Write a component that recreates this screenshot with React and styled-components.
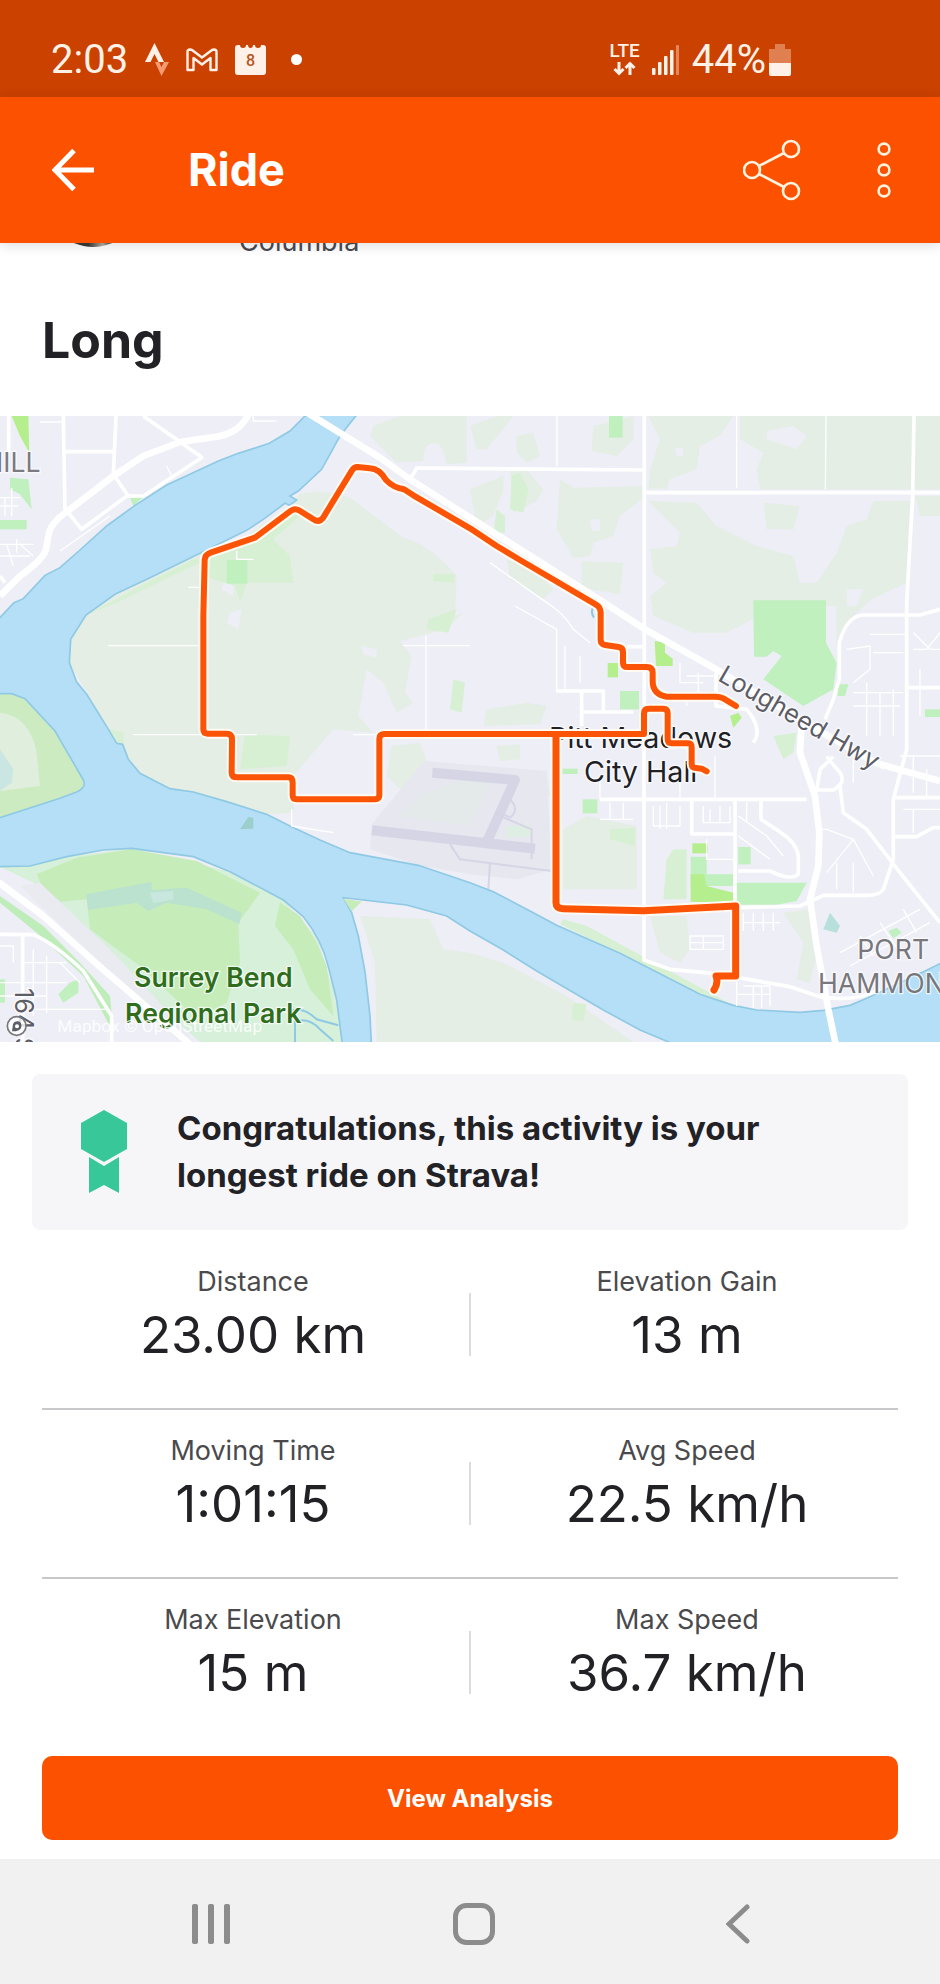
import React from "react";
import styled, { createGlobalStyle } from "styled-components";

const stats = [
  [
    { label: "Distance", value: "23.00 km" },
    { label: "Elevation Gain", value: "13 m" },
  ],
  [
    { label: "Moving Time", value: "1:01:15" },
    { label: "Avg Speed", value: "22.5 km/h" },
  ],
  [
    { label: "Max Elevation", value: "15 m" },
    { label: "Max Speed", value: "36.7 km/h" },
  ],
];

// Map data, drawn in a 2820 x 1878 space
const farmland = [
  "M258 597L345 535L450 485L600 412L780 350L900 235Q960 215 1050 245L1150 320L1210 365Q1290 385 1370 480L1365 600L1390 590L1340 640L1200 675L1235 720L1215 830L1240 860L1190 890L1150 800L1100 760L1075 900L1120 950L1000 940L880 1080L880 1190L800 1195L680 1157L510 1118L420 1072L350 982L208 740L212 670Z",
  "M1120 30L1200 0H1400V140L1340 145Q1330 80 1300 80Q1270 85 1270 135L1190 140L1110 60Z",
  "M1410 30L1490 0H1540L1460 100H1430Z",
  "M1550 60L1600 50L1620 120L1580 140L1550 110Z",
  "M1780 30L1900 0V70L1850 120L1775 105Z",
  "M1945 0H2200L2160 60L2100 90L2090 160L2010 190L2000 218H1945L1950 160L1980 70Z",
  "M2220 0H2820V220H2280L2270 160L2290 110L2220 70Z",
  "M1680 190L1720 215L1925 210V250L1860 300L1840 360L1780 380L1770 420L1720 425L1670 340Z",
  "M1745 435L1870 440L1860 535L1745 515Z",
  "M1410 220L1510 180V220L1480 300L1430 330Z",
  "M1530 160H1580L1630 220L1610 255L1540 290Z",
  "M1520 430L1600 455L1660 520L1630 550L1530 490Z",
  "M1945 255L2090 260L2150 330L2270 390L2380 420L2400 500L2450 500L2510 410L2540 330L2600 310L2620 255H2730L2720 500L2615 550L2560 600L2510 690V570H2260V610L2180 650H2080L1960 600L1950 540L2000 500L1960 470L1950 400L2030 390L2040 350Z",
  "M2290 260L2400 270L2380 340L2300 340Z",
  "M2745 240H2820V300H2760Z",
  "M1690 1240L1760 1200L1910 1230V1420H1690Z",
  "M1460 880L1580 860L1640 870L1620 925L1450 930Z",
  "M1175 990L1260 980L1290 1060L1200 1120L1160 1080Z",
  "M1490 990L1560 985V1030L1500 1035Z",
  "M1575 1080L1640 1075L1650 1140L1580 1140Z",
  "M2350 1490L2430 1480L2450 1620L2430 1700L2390 1690L2410 1580Z",
  "M1950 1500H2060L2070 1600L2040 1640L1980 1610Z",
  "M1080 1500L1290 1510L1330 1600L1410 1610L1510 1640L1700 1740L1900 1878H1130L1125 1640Z",
];

const clearings = [
  "M680 470L700 470V540L665 520Z",
  "M690 590L725 580L715 640L680 620Z",
  "M1085 690L1130 700L1130 725L1090 715Z",
  "M1770 310H1800V345H1775Z",
  "M2025 95H2050V120H2030Z",
  "M2300 45L2380 30L2420 60L2390 100L2300 70Z",
  "M2540 520H2590L2570 570H2540Z",
];

const meadows = [
  "M600 412L740 360L855 280L900 300L820 370L870 420L880 500H740L720 560L705 510L610 480Z",
  "M320 935L370 950V990L340 982Z",
  "M258 597L450 495L590 425L600 440L350 560Z",
  "M735 955L870 960L860 1050L720 1060Z",
  "M1285 610L1370 580L1345 650L1280 640Z",
  "M1300 475L1365 475L1360 500L1300 495Z",
  "M1360 790L1395 800L1385 890L1350 880Z",
  "M1535 180L1560 170L1585 220L1570 290L1530 280Z",
  "M1490 280L1515 300V350H1480Z",
  "M2000 1330L2020 1300L2060 1300V1450H1990Z",
  "M1830 1240L1905 1235V1290L1830 1270Z",
  "M2320 960L2390 950L2380 1010L2350 1030Z",
  "M1690 1510L1760 1530L2000 1660L2200 1768L2100 1735L1860 1612L1680 1525Z",
  "M1720 1760L1760 1765L1750 1815L1715 1810Z",
];

const parks = [
  "M680 432H742V503H680Z",
  "M2260 553H2478V680L2510 740L2500 820L2410 870L2290 790L2345 720L2320 705L2300 722H2262Z",
  "M1827 0H1868V65H1827Z",
  "M1860 825H1917V880H1860Z",
  "M390 245L430 243L400 270Z",
  "M0 312H80V340H0Z",
  "M30 185L85 190L95 280L60 235L30 220Z",
  "M1748 1150H1792V1192H1748Z",
  "M1688 1058H1733V1074H1688Z",
  "M2215 1293H2252V1345H2215Z",
  "M2072 1322H2120V1375H2200V1410H2072Z",
  "M2205 1400L2420 1400L2390 1455L2330 1466H2205Z",
  "M2665 1545L2690 1535L2705 1550L2680 1567Z",
  "M2775 880H2820V903H2775Z",
  "M2513 805H2545L2535 840H2513Z",
  "M175 1735L210 1700L235 1690V1730L190 1760Z",
  "M0 1690H15V1760H0Z",
];

const lawns = [
  "M35 0H85L88 110L60 60Z",
  "M1823 741H1854V784H1823Z",
  "M1964 675L1995 680V710L2018 728V750H1968Z",
  "M2077 1282H2123V1312H2077Z",
  "M2072 1375H2112L2120 1410L2200 1430V1460L2072 1457Z",
  "M2190 900L2215 890L2225 905L2200 935Z",
];

const mainRoads = [
  "M925 -8L1140 125L1230 190L1410 305L1800 552L1935 640L2140 755L2450 940L2630 1042L2820 1095",
  "M745 -5Q720 50 650 62L540 78L430 120L340 180L210 280Q150 320 145 360L138 400Q130 430 60 480L0 540",
  "M2405 920L2400 1010L2445 1140L2458 1250L2455 1350L2430 1450L2450 1590L2485 1780L2506 1880",
  "M-5 1398L130 1500L300 1652L570 1885",
];

const roads = [
  "M1933 0V880",
  "M1230 190L1250 156L1930 162",
  "M1935 230H2820",
  "M2742 0L2738 240L2720 560V1000L2680 1150V1330L2650 1420Q2640 1438 2600 1438H2470L2400 1470L2205 1475",
  "M2475 910L2500 850L2518 790V680Q2540 600 2590 597H2760L2820 580",
  "M1800 1150H2420",
  "M1932 880V1632L2010 1660L2140 1672L2370 1712L2460 1742Q2560 1760 2640 1720",
  "M2205 1150V1470",
  "M2075 1150V1254H2205",
  "M2283 1145V1210L2340 1248Q2390 1280 2395 1320V1375Q2370 1395 2310 1365H2215",
  "M2500 1022L2460 1060L2450 1122H2500Q2540 1100 2520 1070L2480 1022",
  "M2520 1110L2530 1190L2600 1240L2700 1370L2820 1520",
  "M2680 1145H2820",
  "M2680 1262H2750L2800 1235H2820",
  "M2720 815H2820",
  "M1670 825H1810V888H1745M1745 825V930M1745 888H1900",
  "M1880 692H1930",
  "M2148 770V870L2240 880Q2290 940 2260 980",
  "M190 0L195 285M348 0L340 178M190 107H340M430 0L600 120L605 125L430 240L380 240L245 340L205 290M345 182L385 240M26 0V110",
  "M0 1555L100 1556Q160 1580 250 1665L335 1800V1878M68 1560V1878M0 480L15 500",
];

const lanes = [
  "M325 689H600M710 405V430H760M565 514H600M400 956H770M875 1180V1230L1000 1250",
  "M1278 660V950M1210 689H1410M1060 956H1140M1671 0V150M2210 0V215M2478 0L2476 220",
  "M1470 440L1640 560Q1690 590 1720 640L1770 680M1545 570L1670 640V830M1695 690V830M1740 720V800",
  "M2040 740V800H2110M2060 780H2140M2020 830H2100M2060 830V870M2095 770V850",
  "M1960 1170V1230H2040V1170M1980 1170V1240M2000 1160V1240M2110 1170V1220H2190V1170M2130 1180V1220M2160 1170V1220",
  "M2215 1200L2300 1260L2350 1320M2215 1260L2310 1330M2120 1270V1330H2200M2240 1150V1220",
  "M2070 1560H2170V1600H2070ZM2070 1580H2170M2110 1560V1600M2230 1490V1545M2230 1520H2340M2260 1490V1545M2290 1490V1545M2320 1490V1545",
  "M2210 1690V1770M2230 1710H2310V1770M2260 1710V1775M2285 1710V1775M2210 1735H2310",
  "M2480 1240L2560 1270L2620 1380M2560 1270L2480 1370M2510 1340V1420M2560 1340V1430M2480 1240H2460",
  "M2520 1610L2760 1480M2550 1650L2790 1520M2580 1560L2620 1620M2640 1520L2700 1610M2710 1480L2750 1550",
  "M2540 700L2610 690V760L2560 800M2610 655H2720M2560 830H2710M2560 870H2700M2600 800V960M2640 830V960M2680 820V960M2620 710H2710M2740 650L2790 700H2820M2740 700H2780L2820 650M2760 760V900",
  "M2560 1000V1100M2600 1020L2650 1060M2700 1020H2820M2740 1020V1130M2780 1060V1140M2710 1180H2820M2740 1180V1250",
  "M0 245H60M0 270H55M35 215V300M15 245V300M0 385H100M0 420H90M20 385L40 450M60 385L100 420M50 370V410",
  "M0 1590H40V1640M0 1700H200M0 1740H140M100 1600V1800M140 1620V1790M68 1640H200M100 1780H330M180 1640L240 1700",
  "M120 18H190M180 405L330 300M500 150L515 180M760 0V15H830M1800 1090V1150M1800 1210H1900M1830 1160V1210M1870 1160V1210M2145 1020V1145M2040 1090V1145",
];

const river =
  "M915 0L870 45L808 82L715 112L655 135L500 207L405 268L320 330L240 402L180 455L135 478L70 548L42 560L-6 611V833H35L75 848L165 945L250 1092Q260 1115 230 1128L180 1147L-6 1207V1352L90 1350L200 1322L310 1302L395 1297L580 1322L690 1367L850 1452L910 1502Q965 1570 985 1652L1010 1752L1027 1884H1114L1110 1800L1095 1667L1075 1560L1055 1490L1030 1445L1220 1467L1340 1500L1410 1545L1510 1602L1610 1665L1810 1782L1920 1842L2020 1884H2826V1640L2780 1663L2600 1747L2550 1768L2470 1783L2400 1789L2270 1782L2200 1768L2100 1735L1860 1612L1670 1528L1600 1490L1480 1427L1410 1400L1255 1348L1050 1310L960 1272L870 1230L800 1195L680 1157L580 1128L510 1118L420 1072L385 1030L368 985L350 982L322 935L260 835L230 798L208 740L212 670L258 597L345 535L450 485L600 412L740 343L790 310L855 262L868 268L890 252L870 240L895 225L965 160L1020 60L1072 -6Z";

const Tracks = ({ paths, width, color }) => (
  <g
    fill="none"
    stroke={color || "#ffffff"}
    strokeWidth={width}
    strokeLinejoin="round"
  >
    {paths.map((d) => (
      <path key={d} d={d} />
    ))}
  </g>
);

const Areas = ({ paths, color }) => (
  <g fill={color}>
    {paths.map((d) => (
      <path key={d} d={d} />
    ))}
  </g>
);

const RouteLines = ({ color, extra }) => (
  <g
    fill="none"
    stroke={color}
    strokeLinecap="round"
    strokeLinejoin="round"
  >
    <path
      strokeWidth={18 + extra}
      d="M2208 870L2170 847Q2160 842 2145 842H2000Q1958 835 1958 795V770Q1958 753 1940 753H1882Q1869 753 1869 740V708Q1869 695 1856 693L1815 687Q1802 685 1802 672V590Q1802 574 1788 566L1560 432L1490 390L1410 337L1240 238L1212 220Q1180 215 1158 192Q1138 158 1110 157L1072 153Q1062 153 1056 163L970 304Q958 322 940 310L897 283Q885 276 873 284L765 365L632 410Q615 416 614 432L610 600V940Q610 953 623 953H680Q696 953 696 970L695 1070Q695 1084 712 1084H865Q878 1084 878 1100V1138Q878 1150 890 1150H1125Q1138 1150 1138 1137V968Q1138 954 1154 954H1932V892Q1932 878 1946 878H1990Q2003 878 2003 892V970Q2003 982 2016 982H2065Q2075 982 2075 994V1044Q2075 1056 2088 1056L2105 1058L2120 1066"
    />
    <path
      strokeWidth={21 + extra}
      d="M1668 958V1460Q1668 1477 1690 1478L1930 1484L2207 1470V1680H2148Q2156 1700 2142 1722"
    />
  </g>
);

const RideMap = () => (
  <MapCanvas
    viewBox="0 0 2820 1878"
    preserveAspectRatio="xMidYMid slice"
    role="img"
    aria-label="Route map of the ride"
  >
    <rect width="2820" height="1878" fill="#eeeef7" />
    <Areas paths={farmland} color="#e4eee4" />
    <Areas paths={clearings} color="#eeeef7" />
    <Areas paths={meadows} color="#d7f0d4" />
    <Areas paths={parks} color="#bff0bd" />
    <Areas paths={lawns} color="#b5ee8d" />

    {/* Island shore */}
    <path
      d="M0 833H35L75 848L165 945L250 1092L248 1119L180 1147L0 1207Z"
      fill="#cdebc0"
    />
    <path d="M0 890Q90 900 110 1010L120 1110L0 1125Z" fill="#e0eedd" />
    <path d="M0 1000L40 1060L35 1100L0 1125Z" fill="#c9e6e2" />

    {/* Regional park */}
    <path
      d="M0 1352L200 1322L395 1297L690 1367L850 1452L950 1562L1010 1752L1027 1878H600L330 1640L100 1400Z"
      fill="#d6f0d9"
    />
    <path
      d="M110 1375L230 1325L395 1300L590 1335L780 1430L715 1520L720 1640L680 1760L640 1780L560 1780L420 1650L270 1540L260 1450L150 1460Z"
      fill="#c6ecba"
    />
    <path
      d="M840 1460L900 1500L950 1580L980 1650L1000 1800L930 1720L880 1600L825 1530Z"
      fill="#c6ecba"
    />
    <path
      d="M258 1435L455 1397V1422L560 1415L725 1490L718 1525L620 1480L500 1460L445 1485L410 1460L265 1482Z"
      fill="#bbe2cf"
    />
    <path d="M450 1430L520 1425V1450L460 1462Z" fill="#c8e8df" />
    <path d="M60 1410L120 1400L330 1600L480 1760L580 1878H540L300 1640Z" fill="#e9ebf1" />
    <path
      d="M0 1440L130 1530L240 1640L330 1740L340 1850L250 1680L110 1550L0 1460Z"
      fill="#bfedb9"
    />

    {/* Airport */}
    <path
      d="M1272 1035L1640 1065L1655 1360L1555 1390L1410 1375L1255 1348L1110 1300L1115 1225Z"
      fill="#e7e7f0"
    />
    <path d="M1275 1130L1440 1075H1480L1410 1230L1200 1200Z" fill="#e4e9e9" />
    <path d="M1520 1230L1590 1225V1260L1520 1265Z" fill="#dfeee2" />
    <Tracks
      paths={["M1116 1243L1605 1298", "M1297 1070L1545 1092L1455 1290"]}
      width={30}
      color="#d5d5e6"
    />
    <Tracks
      paths={[
        "M1350 1285L1380 1330L1655 1365M1470 1340L1465 1420M1500 1200L1595 1240V1330M1530 1150Q1560 1180 1530 1205L1510 1195",
      ]}
      width={6}
      color="#d5d5e6"
    />

    <path d={river} fill="#b4dff7" stroke="#8fc9e4" strokeWidth="5" />
    <path d="M720 1240L745 1203L760 1205V1238Z" fill="#9ccfcb" />
    <path d="M1030 1448L1085 1457L1055 1486Z" fill="#c6ecba" />
    <path
      d="M870 1785Q910 1770 950 1810L1015 1828M885 1878V1815Q930 1805 960 1840L1000 1875M1785 565Q1768 585 1782 605"
      fill="none"
      stroke="#8fc9e4"
      strokeWidth="6"
    />
    <path d="M2470 1540L2490 1490L2520 1530L2510 1550Z" fill="#b7dfdc" />

    <Tracks paths={lanes} width={4} />
    <Tracks paths={roads} width={11} />
    <Tracks paths={mainRoads} width={20} />

    <MapLabel x="122" y="167" $size={80} $color="#7b7b80" textAnchor="end">
      HILL
    </MapLabel>
    <MapLabel x="1922" y="995" $size={86} $color="#202124" textAnchor="middle">
      Pitt Meadows
    </MapLabel>
    <MapLabel x="1922" y="1097" $size={86} $color="#202124" textAnchor="middle">
      City Hall
    </MapLabel>
    <MapLabel
      x="0"
      y="0"
      $size={76}
      $color="#5d5d66"
      transform="translate(2150 792) rotate(30)"
    >
      Lougheed Hwy
    </MapLabel>
    <MapLabel x="2572" y="1630" $size={80} $color="#77777c">
      PORT
    </MapLabel>
    <MapLabel x="2454" y="1731" $size={80} $color="#77777c">
      HAMMOND
    </MapLabel>
    <MapLabel
      x="640"
      y="1712"
      $size={80}
      $color="#2f6d1d"
      $weight={600}
      textAnchor="middle"
    >
      Surrey Bend
    </MapLabel>
    <MapLabel
      x="640"
      y="1820"
      $size={80}
      $color="#2f6d1d"
      $weight={600}
      textAnchor="middle"
    >
      Regional Park
    </MapLabel>
    <MapLabel
      x="0"
      y="0"
      $size={76}
      $color="#5d5d66"
      transform="translate(44 1716) rotate(90)"
    >
      164 St
    </MapLabel>

    <circle
      cx="50"
      cy="1830"
      r="28"
      fill="#ffffff"
      fillOpacity="0.8"
      stroke="#77777c"
      strokeWidth="5"
    />
    <path
      d="M38 1832Q38 1816 54 1816Q66 1818 64 1832Q62 1846 36 1846Z"
      fill="#5d5d66"
    />
    <circle cx="51" cy="1831" r="6" fill="#ffffff" />
    <Attribution x="172" y="1848">
      Mapbox © OpenStreetMap
    </Attribution>

    <RouteLines color="#fffaf2" extra={12} />
    <RouteLines color="#fb5407" extra={0} />
  </MapCanvas>
);

const StatusIcons = () => (
  <>
    <svg width="24" height="34" viewBox="0 0 24 34" aria-hidden="true">
      <path d="M9.5 0L19 19H13.5L9.5 11L5.5 19H0Z" fill="#fff1e8" />
      <path d="M10 19H14L16.5 24L19 19H24L16.5 33Z" fill="#f59a72" />
    </svg>
    <svg width="32" height="24" viewBox="0 0 32 24" aria-hidden="true">
      <path
        d="M1.5 22V4Q1.5 1.5 4 1.5L6 2L16 9.5L26 2L28 1.5Q30.5 1.5 30.5 4V22H24.5V10L16 16.5L7.5 10V22Z"
        fill="none"
        stroke="#fff1e8"
        strokeWidth="2.4"
        strokeLinejoin="round"
      />
    </svg>
    <svg width="31" height="31" viewBox="0 0 31 31" aria-hidden="true">
      <path
        d="M3 1H5Q5 4 8 4Q11 4 11 1H13Q13 4 15.5 4Q18 4 18 1H20Q20 4 23 4Q26 4 26 1H28Q31 1 31 4V28Q31 31 28 31H3Q0 31 0 28V4Q0 1 3 1Z"
        fill="#fff1e8"
      />
      <text
        x="15.5"
        y="22"
        textAnchor="middle"
        fontFamily="Roboto, sans-serif"
        fontSize="16"
        fontWeight="500"
        fill="#b5551f"
      >
        8
      </text>
    </svg>
  </>
);

const App = () => {
  return (
    <Screen>
      <GlobalStyle />
      <StatusBar>
        <StatusLeft>
          <Clock>2:03</Clock>
          <StatusIcons />
          <Dot />
        </StatusLeft>
        <StatusRight>
          <Network>
            LTE
            <svg width="23" height="15" viewBox="0 0 23 15" aria-hidden="true">
              <path
                d="M6 1V12M1.5 8L6 12.5L10.5 8M17 14V3M12.5 7L17 2.5L21.5 7"
                fill="none"
                stroke="#fff1e8"
                strokeWidth="3"
              />
            </svg>
          </Network>
          <svg width="28" height="30" viewBox="0 0 28 30" aria-hidden="true">
            <g fill="#fff1e8">
              <rect x="0" y="23" width="3.5" height="7" rx="1" />
              <rect x="6" y="17" width="3.5" height="13" rx="1" />
              <rect x="12" y="11" width="3.5" height="19" rx="1" />
              <rect x="18" y="5" width="3.5" height="25" rx="1" />
            </g>
            <rect x="24" y="0" width="3" height="30" rx="1" fill="#e5875a" />
          </svg>
          <Charge>
            44%
            <svg width="22" height="32" viewBox="0 0 22 32" aria-hidden="true">
              <path d="M6 0H16V5H22V20H0V5H6Z" fill="#e08050" />
              <path d="M0 19H22V30Q22 32 20 32H2Q0 32 0 30Z" fill="#fff1e8" />
            </svg>
          </Charge>
        </StatusRight>
      </StatusBar>

      <AppBar>
        <IconButton aria-label="Back">
          <svg width="42" height="42" viewBox="0 0 42 42">
            <path
              d="M22 1.5L3 21L22 40.5M3 21H42"
              fill="none"
              stroke="#ffffff"
              strokeWidth="5"
            />
          </svg>
        </IconButton>
        <Heading>Ride</Heading>
        <Actions>
          <IconButton aria-label="Share">
            <svg width="58" height="62" viewBox="0 0 58 62">
              <g fill="none" stroke="#fff3e0" strokeWidth="2.6">
                <circle cx="9" cy="31" r="8" />
                <circle cx="48" cy="10" r="8" />
                <circle cx="48" cy="52" r="8" />
                <path d="M16 27L41 14M16 35L41 48" />
              </g>
            </svg>
          </IconButton>
          <IconButton aria-label="More options">
            <svg width="14" height="56" viewBox="0 0 14 56">
              <g fill="none" stroke="#fff3e0" strokeWidth="2.6">
                <circle cx="7" cy="7" r="5.4" />
                <circle cx="7" cy="28" r="5.4" />
                <circle cx="7" cy="49" r="5.4" />
              </g>
            </svg>
          </IconButton>
        </Actions>
      </AppBar>

      <main>
        <Athlete>
          <Avatar />
          <Place>Columbia</Place>
        </Athlete>
        <Title>Long</Title>
        <RideMap />
        <Achievement>
          <svg width="46" height="84" viewBox="0 0 46 84" aria-hidden="true">
            <path d="M23 0L46 13V39L23 52L0 39V13Z" fill="#37c799" />
            <path d="M8 47L23 56L38 47V83L23 75L8 83Z" fill="#37c799" />
          </svg>
          <p>Congratulations, this activity is your longest ride on Strava!</p>
        </Achievement>
        <Stats>
          {stats.map(([left, right]) => (
            <StatRow key={left.label}>
              <Stat>
                <dt>{left.label}</dt>
                <dd>{left.value}</dd>
              </Stat>
              <Stat>
                <dt>{right.label}</dt>
                <dd>{right.value}</dd>
              </Stat>
            </StatRow>
          ))}
        </Stats>
        <AnalysisButton>View Analysis</AnalysisButton>
      </main>

      <NavBar>
        <IconButton aria-label="Recent apps">
          <svg width="38" height="40" viewBox="0 0 38 40">
            <g fill="#8c8c8c">
              <rect x="0" y="0" width="6" height="40" rx="2" />
              <rect x="16" y="0" width="6" height="40" rx="2" />
              <rect x="32" y="0" width="6" height="40" rx="2" />
            </g>
          </svg>
        </IconButton>
        <IconButton aria-label="Home">
          <svg width="42" height="42" viewBox="0 0 42 42">
            <rect
              x="2.5"
              y="2.5"
              width="37"
              height="37"
              rx="11"
              fill="none"
              stroke="#8c8c8c"
              strokeWidth="5"
            />
          </svg>
        </IconButton>
        <IconButton aria-label="Back to previous screen">
          <svg width="24" height="40" viewBox="0 0 24 40">
            <path
              d="M21 3L3 20L21 37"
              fill="none"
              stroke="#8c8c8c"
              strokeWidth="5"
              strokeLinecap="round"
            />
          </svg>
        </IconButton>
      </NavBar>
    </Screen>
  );
};

// Style
const GlobalStyle = createGlobalStyle`
  * {
    margin: 0;
    padding: 0;
    box-sizing: border-box;
  }
  body {
    background: #ffffff;
    font-family: Inter, "Liberation Sans", sans-serif;
    color: #222226;
  }
  svg {
    display: block;
    flex-shrink: 0;
  }
`;

const Screen = styled.div`
  width: 100%;
`;

const StatusBar = styled.div`
  display: flex;
  justify-content: space-between;
  height: 97px;
  padding: 22px 149px 0 51px;
  background: #cb4100;
  color: #fff1e8;
  font-family: Roboto, sans-serif;
`;

const StatusLeft = styled.div`
  display: flex;
  align-items: center;
  gap: 17px;
`;

const Clock = styled.span`
  font-size: 40px;
  line-height: 48px;
`;

const Dot = styled.span`
  width: 11px;
  height: 11px;
  margin-left: 8px;
  border-radius: 50%;
  background: #ffffff;
`;

const StatusRight = styled.div`
  display: flex;
  align-items: center;
  gap: 12px;
`;

const Network = styled.div`
  display: flex;
  flex-direction: column;
  align-items: center;
  gap: 2px;
  font-size: 19px;
  font-weight: 500;
  line-height: 16px;
`;

const Charge = styled.div`
  display: flex;
  align-items: center;
  gap: 3px;
  font-size: 40px;
  line-height: 48px;
`;

const AppBar = styled.header`
  position: relative;
  z-index: 1;
  display: flex;
  align-items: center;
  height: 146px;
  padding: 0 49px 0 52px;
  background: #fc5200;
  box-shadow: 0 2px 12px rgba(0, 0, 0, 0.14);
`;

const IconButton = styled.button`
  display: flex;
  align-items: center;
  justify-content: center;
  border: none;
  background: none;
  cursor: pointer;
`;

const Heading = styled.h1`
  margin-left: 94px;
  color: #ffffff;
  font-size: 45px;
  font-weight: 700;
  line-height: 56px;
`;

const Actions = styled.div`
  display: flex;
  align-items: center;
  gap: 76px;
  margin-left: auto;
`;

// Only the tail of this row shows below the app bar
const Athlete = styled.div`
  display: flex;
  align-items: flex-end;
  gap: 98px;
  height: 16px;
  padding: 0 45px;
  overflow: hidden;
`;

const Avatar = styled.div`
  width: 96px;
  height: 96px;
  margin-bottom: 12px;
  border-radius: 50%;
  background: linear-gradient(90deg, #3b3838 45%, #b8ada3 60%, #3b3838 70%);
`;

const Place = styled.span`
  color: #4a4a50;
  font-size: 27px;
  line-height: 34px;
`;

const Title = styled.h2`
  padding: 51px 42px 46px;
  font-size: 50px;
  font-weight: 700;
  line-height: 60px;
`;

const MapCanvas = styled.svg`
  width: 100%;
  aspect-ratio: 940 / 626;
`;

const MapLabel = styled.text`
  fill: ${(props) => props.$color};
  stroke: rgba(255, 255, 255, 0.7);
  stroke-width: 8px;
  paint-order: stroke;
  font-size: ${(props) => props.$size}px;
  font-weight: ${(props) => props.$weight || 400};
`;

const Attribution = styled.text`
  fill: rgba(255, 255, 255, 0.85);
  font-family: Roboto, sans-serif;
  font-size: 52px;
`;

const Achievement = styled.section`
  display: flex;
  align-items: center;
  gap: 50px;
  min-height: 156px;
  margin: 32px 32px 11px;
  padding: 0 130px 0 49px;
  border-radius: 8px;
  background: #f6f6f9;
  p {
    font-size: 33px;
    font-weight: 700;
    line-height: 47px;
  }
`;

const Stats = styled.dl`
  margin: 0 42px;
`;

const StatRow = styled.div`
  display: flex;
  gap: 12px;
  height: 169px;
  padding-top: 23px;
  border-bottom: 2px solid #c8c8ca;
  &:last-child {
    border-bottom: none;
  }
  &::before {
    content: "";
    order: 1;
    width: 2px;
    height: 63px;
    margin: 29px -7px 0;
    background: #dcdcde;
  }
  > :last-child {
    order: 2;
  }
`;

const Stat = styled.div`
  flex: 1;
  text-align: center;
  dt {
    color: #4a4a4d;
    font-size: 27px;
    line-height: 36px;
  }
  dd {
    margin-top: 5px;
    font-size: 51px;
    line-height: 60px;
  }
`;

const AnalysisButton = styled.button`
  display: block;
  width: calc(100% - 84px);
  height: 84px;
  margin: 8px 42px 19px;
  border: none;
  border-radius: 10px;
  background: #fc5200;
  color: #ffffff;
  font-family: inherit;
  font-size: 24px;
  font-weight: 700;
  cursor: pointer;
`;

const NavBar = styled.nav`
  display: grid;
  grid-template-columns: repeat(3, 1fr);
  height: 125px;
  padding: 4px 70px 0 79px;
  background: #f1f1f1;
`;

export default App;
